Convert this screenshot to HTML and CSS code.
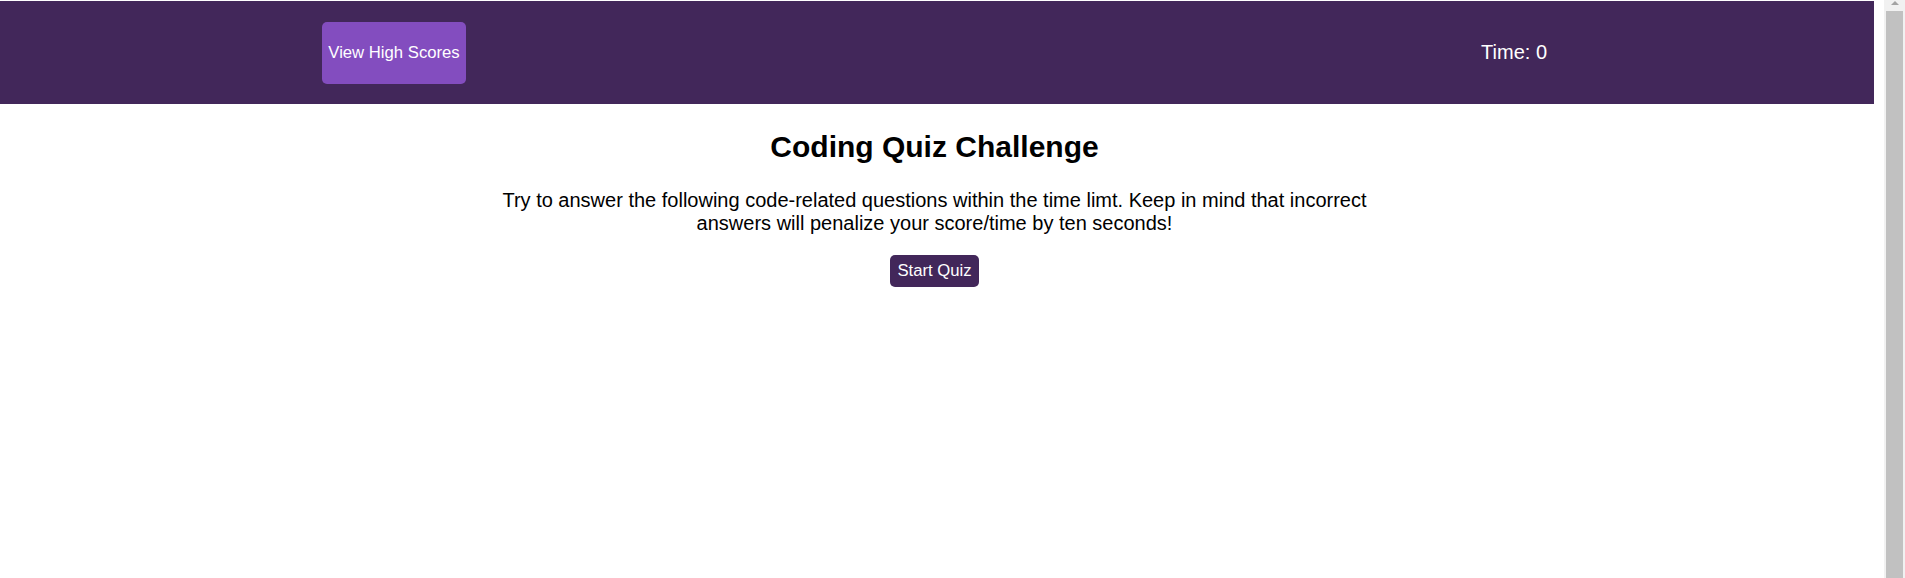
FILE: index.html
```html
<!DOCTYPE html>
<html lang="en">
<head>
<meta charset="utf-8">
<title>Coding Quiz Challenge</title>
<link rel="stylesheet" href="styles.css">
</head>
<body>
  <div class="page">
    <header class="topbar">
      <button class="scores-btn" type="button">View High Scores</button>
      <div class="timer">Time: 0</div>
    </header>
    <main class="intro">
      <h1 class="title">Coding Quiz Challenge</h1>
      <p class="desc">Try to answer the following code-related questions within the time limt. Keep in mind that incorrect answers will penalize your score/time by ten seconds!</p>
      <button class="start-btn" type="button">Start Quiz</button>
    </main>
  </div>
  <div class="scrollbar" aria-hidden="true">
    <div class="scroll-arrow"></div>
    <div class="scroll-thumb"></div>
  </div>
</body>
</html>
```

FILE: styles.css
```css
html, body {
  margin: 0;
  padding: 0;
  height: 100%;
  overflow: hidden;
}

body {
  display: flex;
  font-family: "Liberation Sans", Arial, sans-serif;
  background: #ffffff;
  color: #000000;
}

.page {
  flex: 1;
  padding-right: 10px;
  min-width: 0;
}

.topbar {
  margin-top: 1px;
  height: 103px;
  box-sizing: border-box;
  background: #42275a;
  display: flex;
  align-items: center;
  justify-content: space-between;
  padding: 0 327px 0 322px;
}

.scores-btn {
  width: 144px;
  height: 62px;
  padding: 0;
  border: none;
  border-radius: 5px;
  background: #834dbf;
  color: #ffffff;
  font-family: "Liberation Sans", Arial, sans-serif;
  font-size: 16.7px;
  cursor: pointer;
}

.timer {
  color: #ffffff;
  font-size: 20px;
  line-height: 23px;
}

.intro {
  display: flex;
  flex-direction: column;
  align-items: center;
  text-align: center;
  padding-right: 5px;
}

.title {
  margin: 26px 0 0;
  font-size: 30px;
  font-weight: bold;
  line-height: 34px;
}

.desc {
  margin: 25px 0 0;
  max-width: 900px;
  font-size: 20px;
  line-height: 23px;
}

.start-btn {
  margin-top: 20px;
  height: 32px;
  padding: 0 7px;
  border: none;
  border-radius: 5px;
  background: #42275a;
  color: #ffffff;
  font-family: "Liberation Sans", Arial, sans-serif;
  font-size: 16.7px;
  cursor: pointer;
}

.scrollbar {
  width: 21px;
  flex: none;
  background: #f1f1f1;
  display: flex;
  flex-direction: column;
  align-items: center;
  box-sizing: border-box;
  padding: 1px 2px 0;
}

.scroll-arrow {
  width: 0;
  height: 0;
  border-left: 4px solid transparent;
  border-right: 4px solid transparent;
  border-bottom: 4px solid #a3a3a3;
  margin-bottom: 6px;
}

.scroll-thumb {
  align-self: stretch;
  flex: 1;
  background: #c1c1c1;
}
```
